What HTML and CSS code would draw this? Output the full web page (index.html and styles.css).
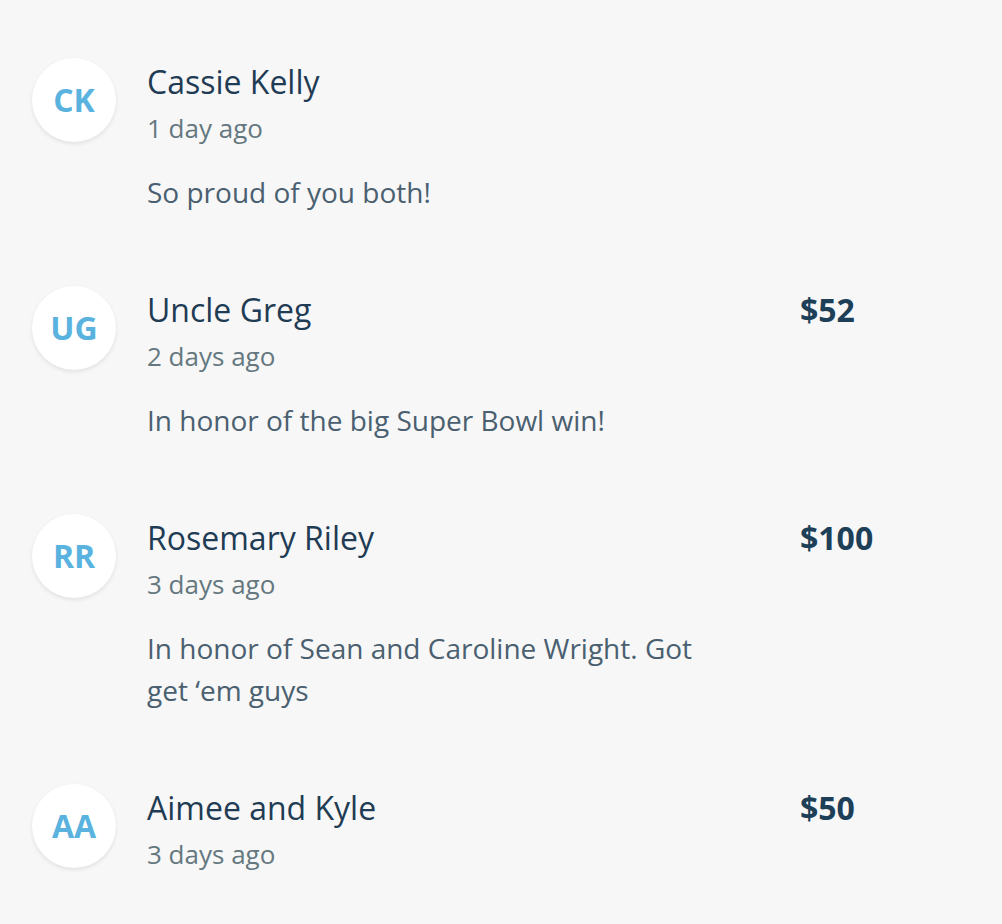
FILE: index.html
```html
<!DOCTYPE html>
<html lang="en">
<head>
<meta charset="utf-8">
<title>Donations</title>
<link rel="stylesheet" href="styles.css">
</head>
<body>
<ul class="feed">
  <li class="entry">
    <div class="avatar">CK</div>
    <div class="body">
      <div class="head">
        <span class="name">Cassie Kelly</span>
      </div>
      <div class="time">1 day ago</div>
      <p class="message">So proud of you both!</p>
    </div>
  </li>
  <li class="entry">
    <div class="avatar">UG</div>
    <div class="body">
      <div class="head">
        <span class="name">Uncle Greg</span>
        <span class="amount">$52</span>
      </div>
      <div class="time">2 days ago</div>
      <p class="message">In honor of the big Super Bowl win!</p>
    </div>
  </li>
  <li class="entry">
    <div class="avatar">RR</div>
    <div class="body">
      <div class="head">
        <span class="name">Rosemary Riley</span>
        <span class="amount">$100</span>
      </div>
      <div class="time">3 days ago</div>
      <p class="message">In honor of Sean and Caroline Wright. Got get ‘em guys</p>
    </div>
  </li>
  <li class="entry">
    <div class="avatar">AA</div>
    <div class="body">
      <div class="head">
        <span class="name">Aimee and Kyle</span>
        <span class="amount">$50</span>
      </div>
      <div class="time">3 days ago</div>
    </div>
  </li>
</ul>
</body>
</html>
```
FILE: styles.css
```css
html, body {
  margin: 0;
  padding: 0;
  background: #f7f7f7;
  font-family: "Open Sans", "Noto Sans", sans-serif;
}

.feed {
  list-style: none;
  margin: 0;
  padding: 58px 0 0 32px;
}

.entry {
  display: flex;
  align-items: flex-start;
  gap: 31px;
  margin-bottom: 73px;
}

.avatar {
  flex: 0 0 84px;
  width: 84px;
  height: 84px;
  border-radius: 50%;
  background: #ffffff;
  box-shadow: 0 2px 4px rgba(0, 0, 0, 0.09);
  display: flex;
  align-items: center;
  justify-content: center;
  color: #5ab3df;
  font-weight: 700;
  font-size: 32px;
  line-height: 1;
}

.body {
  padding-top: 2px;
}

.head {
  display: grid;
  grid-template-columns: 653px auto;
  line-height: 44px;
  font-size: 32px;
}

.name {
  color: #1f3c54;
}

.amount {
  color: #1e3f58;
  font-weight: 700;
}

.time {
  margin-top: 6px;
  font-size: 26px;
  line-height: 36px;
  color: #65787f;
}

.message {
  margin: 25px 0 0;
  max-width: 570px;
  font-size: 28px;
  line-height: 42px;
  color: #4a6070;
}
```
